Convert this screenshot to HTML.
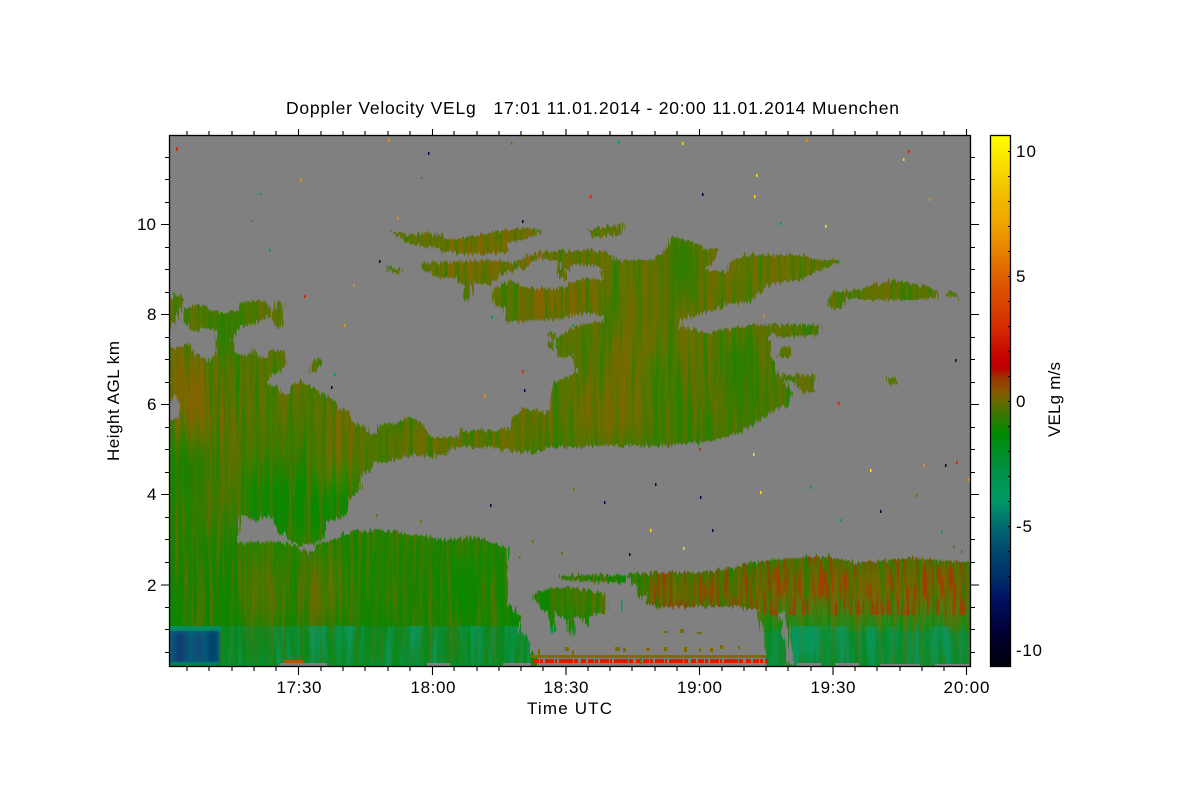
<!DOCTYPE html>
<html><head><meta charset="utf-8"><title>Doppler Velocity VELg</title>
<style>
html,body{margin:0;padding:0;background:#fff}
svg{display:block}
text{font-family:"Liberation Sans",sans-serif;font-size:17px;fill:#000}
</style></head><body>
<svg width="1200" height="800" viewBox="0 0 1200 800" xmlns="http://www.w3.org/2000/svg">
<defs>
<linearGradient id="cb" x1="0" y1="135" x2="0" y2="667" gradientUnits="userSpaceOnUse">
<stop offset="0" stop-color="#ffff00"/><stop offset=".122" stop-color="#f0b800"/><stop offset=".16" stop-color="#efa800"/>
<stop offset=".222" stop-color="#e67f00"/><stop offset=".267" stop-color="#dd5f00"/><stop offset=".361" stop-color="#d42c00"/>
<stop offset=".423" stop-color="#c40000"/><stop offset=".438" stop-color="#bb0000"/><stop offset=".455" stop-color="#9c3000"/>
<stop offset=".479" stop-color="#8a5400"/><stop offset=".5" stop-color="#6a6a00"/><stop offset=".523" stop-color="#3d7500"/>
<stop offset=".56" stop-color="#008a00"/><stop offset=".624" stop-color="#009040"/><stop offset=".686" stop-color="#009a66"/>
<stop offset=".737" stop-color="#006a70"/><stop offset=".78" stop-color="#004a6e"/><stop offset=".83" stop-color="#003068"/>
<stop offset=".874" stop-color="#000f60"/><stop offset=".936" stop-color="#000033"/><stop offset="1" stop-color="#000008"/>
</linearGradient>
<linearGradient id="base" x1="0" y1="135" x2="0" y2="666" gradientUnits="userSpaceOnUse">
<stop offset="0" stop-color="#6c7000"/><stop offset=".4" stop-color="#5c7400"/><stop offset=".65" stop-color="#3a7c00"/><stop offset=".85" stop-color="#168400"/><stop offset="1" stop-color="#0a8800"/>
</linearGradient>
<filter id="jag" x="160" y="125" width="820" height="550" filterUnits="userSpaceOnUse" color-interpolation-filters="sRGB">
<feTurbulence type="fractalNoise" baseFrequency="0.5 0.05" numOctaves="2" seed="7" result="n"/>
<feDisplacementMap in="SourceGraphic" in2="n" scale="11" xChannelSelector="A" yChannelSelector="R"/>
</filter>
<filter id="sg" x="169" y="135" width="801" height="531" filterUnits="userSpaceOnUse" color-interpolation-filters="sRGB">
<feTurbulence type="fractalNoise" baseFrequency="0.22 0.008" numOctaves="3" seed="4"/>
<feColorMatrix values="0 0 0 0 0  0 0 0 0 .54  0 0 0 0 0  3.6 0 0 0 -1.5"/>
</filter>
<filter id="sb" x="169" y="135" width="801" height="531" filterUnits="userSpaceOnUse" color-interpolation-filters="sRGB">
<feTurbulence type="fractalNoise" baseFrequency="0.24 0.009" numOctaves="3" seed="19"/>
<feColorMatrix values="0 0 0 0 .56  0 0 0 0 .38  0 0 0 0 0  3.4 0 0 0 -1.5"/>
</filter>
<filter id="sr" x="640" y="555" width="330" height="60" filterUnits="userSpaceOnUse" color-interpolation-filters="sRGB">
<feTurbulence type="fractalNoise" baseFrequency="0.3 0.03" numOctaves="2" seed="23"/>
<feColorMatrix values="0 0 0 0 .68  0 0 0 0 .2  0 0 0 0 0  5 0 0 0 -2.4"/>
</filter>
<filter id="st" x="169" y="626" width="801" height="40" filterUnits="userSpaceOnUse" color-interpolation-filters="sRGB">
<feTurbulence type="fractalNoise" baseFrequency="0.13 0.012" numOctaves="2" seed="11"/>
<feColorMatrix values="0 0 0 0 .04  0 0 0 0 .6  0 0 0 0 .42  3 0 0 0 -1.2"/>
</filter>
<filter id="bl" x="150" y="120" width="840" height="560" filterUnits="userSpaceOnUse"><feGaussianBlur stdDeviation="9 14"/></filter>
<filter id="bs" x="150" y="120" width="840" height="560" filterUnits="userSpaceOnUse"><feGaussianBlur stdDeviation="3 2"/></filter>
<mask id="m" maskUnits="userSpaceOnUse" x="169" y="135" width="801" height="531">
<rect x="169" y="135" width="801" height="531" fill="#000"/>
<g filter="url(#jag)" fill="#fff">
<polygon points="165,343 179,348 189,343 192,352 202,357 209,362 216,352 216,333 214,330 202,328 192,330 184,322 184,310 199,305 211,308 219,313 236,310 239,303 261,300 271,308 271,315 259,322 241,327 232,340 236,350 244,356 254,353 252,343 257,355 266,358 271,350 284,352 287,363 279,372 271,375 267,384 279,387 281,395 289,393 291,387 301,380 311,387 326,395 336,402 339,408 349,412 351,422 364,425 366,432 379,433 379,425 402,422 407,416 422,423 430,440 449,455 416,453 396,460 382,462 374,460 372,470 361,477 359,490 349,500 344,517 326,522 322,540 316,543 297,545 286,538 276,527 272,517 262,517 256,522 241,513 237,537 237,560 165,680"/>
<polygon points="165,303 179,293 184,300 176,320 165,335"/>
<polygon points="272,317 278,300 283,305 282,328 274,328"/>
<polygon points="311,361 320,358 323,362 316,370 310,372"/>
<polygon points="165,500 237,500 235,547 238,543 273,542 287,543 310,553 320,543 327,542 350,532 383,530 420,535 443,540 477,537 507,548 508,603 520,617 520,632 528,635 530,652 537,657 537,672 165,672"/>
<polygon points="405,430 423,437 457,437 463,430 497,430 510,427 512,418 523,408 537,410 538,415 550,410 552,383 577,373 572,358 575,355 558,358 557,338 573,327 590,323 604,321 604,314 613,300 613,260 653,260 665,250 672,237 687,240 707,248 720,250 713,262 703,270 727,272 728,262 747,255 805,255 815,260 843,260 827,267 813,273 800,280 773,283 760,292 750,302 730,303 707,313 680,320 680,327 710,332 750,325 760,325 767,333 770,342 773,363 783,380 793,393 787,405 770,413 760,420 740,433 707,442 660,445 573,447 553,447 533,453 507,450 480,447 453,448 435,457 413,455 383,463 370,462"/>
<polygon points="750,325 822,325 817,335 780,337 765,333"/>
<polygon points="777,355 783,347 790,347 791,357 782,358"/>
<polygon points="783,375 815,375 817,392 803,393 795,382 785,380"/>
<polygon points="833,292 857,290 880,283 893,280 930,287 939,293 938,297 917,300 867,300 847,298 840,310 828,307 828,298"/>
<polygon points="947,292 958,296 957,298 946,296"/>
<polygon points="888,378 896,378 897,383 887,384"/>
<polygon points="390,230 408,235 433,233 450,240 487,233 520,228 543,230 530,238 507,243 507,252 477,255 447,253 437,248 410,245"/>
<polygon points="587,230 623,223 622,233 593,238"/>
<polygon points="420,263 447,262 490,260 515,263 527,255 553,250 593,250 613,255 613,267 570,263 538,258 527,267 503,273 490,285 473,283 468,303 463,297 465,288 455,278 437,277 422,268"/>
<polygon points="388,267 400,268 400,272 388,272"/>
<polygon points="493,297 495,288 512,280 523,288 555,289 585,278 615,265 620,320 590,313 575,315 560,319 505,322 505,307 495,307"/>
<polygon points="560,257 612,262 612,272 590,264 570,266 566,280 558,278"/>
<polygon points="556,335 548,333 552,340 546,345 550,350"/>
<polygon points="646,573 700,572 723,570 750,563 770,560 807,557 830,557 857,563 910,558 975,563 975,672 767,672 765,640 760,623 757,610 733,607 700,607 660,607 647,603"/>
<polygon points="560,575 627,575 627,583 600,582 560,580"/>
<polygon points="627,574 650,574 650,590 640,600 634,585"/>
<polygon points="533,593 553,588 577,588 603,593 608,610 583,618 563,617 543,610 535,600"/>
<polygon points="548,612 553,612 556,630 552,632"/>
<polygon points="565,615 575,615 573,637 571,637"/>
<polygon points="583,615 590,615 588,626 585,626"/>
</g>
<g filter="url(#jag)" fill="#000">
<polygon points="165,407 176,393 179,408 178,418 165,421"/>
<polygon points="780,613 785,613 794,664 787,664"/>
<polygon points="563,270 603,273 603,280 583,278 567,280"/>
</g>
</mask>
<clipPath id="pc"><rect x="169" y="135" width="801" height="531"/></clipPath>
</defs>

<rect width="1200" height="800" fill="#fff"/>
<rect x="169" y="135" width="801" height="531" fill="#808080"/>

<g clip-path="url(#pc)">
<g mask="url(#m)">
<rect x="169" y="135" width="801" height="531" fill="url(#base)"/>
<g filter="url(#bl)">
<rect x="169" y="340" width="38" height="90" fill="#8c6400"/>
<rect x="205" y="310" width="30" height="20" fill="#7a6b00"/>
<rect x="210" y="400" width="30" height="70" fill="#7a6800"/>
<rect x="200" y="490" width="30" height="35" fill="#8a6200"/>
<rect x="325" y="400" width="35" height="70" fill="#7e6800"/>
<rect x="385" y="430" width="140" height="25" fill="#7d6a00"/>
<rect x="525" y="390" width="30" height="50" fill="#8a6400"/>
<rect x="440" y="235" width="110" height="40" fill="#866600"/>
<rect x="520" y="285" width="70" height="32" fill="#8a6200"/>
<rect x="615" y="330" width="50" height="100" fill="#786c00"/>
<rect x="575" y="385" width="40" height="55" fill="#7c6a00"/>
<rect x="720" y="260" width="90" height="20" fill="#777000"/>
<rect x="680" y="330" width="60" height="10" fill="#6e7000"/>
<rect x="170" y="430" width="60" height="180" fill="#227e00" opacity=".6"/>
<rect x="245" y="470" width="105" height="70" fill="#0c8800"/>
<rect x="205" y="300" width="40" height="60" fill="#2b8000"/>
<rect x="250" y="560" width="30" height="60" fill="#7c6a00" opacity=".8"/>
<rect x="300" y="560" width="28" height="60" fill="#8a6200" opacity=".8"/>
<rect x="330" y="550" width="60" height="60" fill="#1a8400" opacity=".8"/>
<rect x="395" y="545" width="40" height="70" fill="#1f8000" opacity=".8"/>
<rect x="440" y="545" width="70" height="80" fill="#0a8800"/>
<rect x="650" y="350" width="25" height="90" fill="#3f7a00"/>
<rect x="725" y="340" width="30" height="90" fill="#2d7e00"/>
<rect x="670" y="240" width="25" height="60" fill="#2a7e00"/>
<rect x="560" y="590" width="50" height="10" fill="#8a5e00"/>
<rect x="560" y="605" width="40" height="8" fill="#2d7c00"/>
<rect x="640" y="578" width="130" height="28" fill="#8c5a00"/>
<rect x="770" y="565" width="200" height="40" fill="#7d6200"/>
<rect x="760" y="612" width="210" height="54" fill="#0a8c20"/>
</g>
<rect x="169" y="135" width="801" height="531" filter="url(#sg)" opacity=".55"/>
<rect x="169" y="135" width="801" height="531" filter="url(#sb)" opacity=".5"/>
<rect x="640" y="555" width="330" height="60" filter="url(#sr)" opacity=".8"/>
<rect x="219" y="626" width="311" height="40" fill="#04905a" opacity=".3"/>
<rect x="765" y="632" width="205" height="34" fill="#04905a" opacity=".3"/>
<rect x="169" y="626" width="801" height="40" filter="url(#st)" opacity=".75"/>
<rect x="169" y="626" width="52" height="6" fill="#008e60"/>
<rect x="169" y="631" width="50" height="33" fill="#0a5e78"/>
<g filter="url(#bs)">
<rect x="174" y="633" width="12" height="29" fill="#073c72"/>
<rect x="193" y="634" width="9" height="28" fill="#0a4a76"/>
<rect x="208" y="632" width="9" height="30" fill="#053f6c"/>
</g>
<rect x="169" y="662" width="50" height="3" fill="#007a6a"/>
</g>
<!-- surface band -->
<rect x="530" y="655" width="236" height="3" fill="#7c6c00"/>
<line x1="533" y1="661" x2="768" y2="661" stroke="#d81e00" stroke-width="4" stroke-dasharray="6 1 3 2 9 1 2 2 14 1 4 3 5 2"/>
<rect x="640" y="656" width="2" height="8" fill="#6b7000"/>
<g fill="#7b6a00">
<rect x="538" y="649" width="2" height="6"/><rect x="565" y="647" width="4" height="4"/><rect x="572" y="650" width="2" height="5"/>
<rect x="615" y="647" width="5" height="4"/><rect x="623" y="648" width="3" height="4"/><rect x="646" y="648" width="4" height="3"/>
<rect x="664" y="647" width="3" height="4"/><rect x="684" y="647" width="3" height="5"/><rect x="699" y="648" width="2" height="4"/>
<rect x="697" y="632" width="5" height="2"/><rect x="680" y="629" width="4" height="4"/><rect x="664" y="631" width="4" height="2"/>
<rect x="720" y="645" width="3" height="4"/><rect x="710" y="648" width="3" height="4"/><rect x="738" y="646" width="2" height="3"/>
</g>
<g fill="#808080">
<rect x="280" y="663" width="47" height="3"/><rect x="427" y="663" width="23" height="3"/><rect x="503" y="663" width="28" height="3"/>
<rect x="797" y="663" width="24" height="3"/><rect x="835" y="663" width="24" height="3"/><rect x="880" y="664" width="40" height="2"/><rect x="935" y="664" width="34" height="2"/>
</g>
<rect x="283" y="660" width="20" height="3" fill="#a85a00"/>
<!-- specks -->
<g fill="#d42000">
<rect x="176" y="147" width="1.5" height="4"/><rect x="304" y="295" width="1.5" height="3"/><rect x="699" y="448" width="1.5" height="3"/><rect x="838" y="402" width="1.5" height="3"/><rect x="908" y="150" width="1.5" height="3"/><rect x="956" y="461" width="1.5" height="3"/><rect x="590" y="195" width="1.5" height="3"/><rect x="522" y="370" width="1.5" height="3"/>
</g>
<g fill="#f09000">
<rect x="388" y="139" width="1.5" height="3"/><rect x="300" y="179" width="1.5" height="3"/><rect x="344" y="324" width="1.5" height="3"/><rect x="353" y="284" width="1.5" height="3"/><rect x="397" y="217" width="1.5" height="3"/><rect x="484" y="394" width="1.5" height="3"/><rect x="763" y="314" width="1.5" height="3"/><rect x="929" y="198" width="1.5" height="3"/><rect x="923" y="464" width="1.5" height="3"/><rect x="968" y="478" width="1.5" height="3"/><rect x="806" y="139" width="1.5" height="3"/>
</g>
<g fill="#ffe000">
<rect x="903" y="158" width="1.5" height="3"/><rect x="753" y="453" width="1.5" height="3"/><rect x="756" y="174" width="1.5" height="3"/><rect x="754" y="195" width="1.5" height="3"/><rect x="760" y="491" width="1.5" height="3"/><rect x="870" y="469" width="1.5" height="3"/><rect x="683" y="547" width="1.5" height="3"/><rect x="650" y="529" width="1.5" height="3"/><rect x="825" y="225" width="1.5" height="3"/><rect x="682" y="142" width="1.5" height="3"/>
</g>
<g fill="#000a40">
<rect x="428" y="152" width="1.5" height="3"/><rect x="331" y="386" width="1.5" height="3"/><rect x="379" y="260" width="1.5" height="3"/><rect x="522" y="220" width="1.5" height="3"/><rect x="524" y="389" width="1.5" height="3"/><rect x="955" y="359" width="1.5" height="3"/><rect x="945" y="464" width="1.5" height="3"/><rect x="702" y="193" width="1.5" height="3"/><rect x="655" y="483" width="1.5" height="3"/><rect x="604" y="501" width="1.5" height="3"/><rect x="490" y="504" width="1.5" height="3"/><rect x="700" y="496" width="1.5" height="3"/><rect x="712" y="529" width="1.5" height="3"/><rect x="880" y="510" width="1.5" height="3"/><rect x="629" y="553" width="1.5" height="3"/>
</g>
<g fill="#009a66">
<rect x="260" y="193" width="1.5" height="2"/><rect x="269" y="249" width="1.5" height="3"/><rect x="334" y="373" width="1.5" height="3"/><rect x="387" y="265" width="1.5" height="3"/><rect x="491" y="316" width="2" height="3"/><rect x="572" y="324" width="1.5" height="3"/><rect x="780" y="222" width="1.5" height="3"/><rect x="941" y="531" width="1.5" height="3"/><rect x="618" y="141" width="1.5" height="3"/><rect x="810" y="486" width="1.5" height="3"/><rect x="840" y="519" width="1.5" height="3"/><rect x="621" y="600" width="1.5" height="12"/>
</g>
<g fill="#6a7000">
<rect x="251" y="220" width="1.5" height="2"/><rect x="421" y="177" width="1.5" height="2"/><rect x="916" y="494" width="1.5" height="3"/><rect x="953" y="545" width="1.5" height="3"/><rect x="961" y="550" width="1.5" height="3"/><rect x="511" y="142" width="1.5" height="3"/><rect x="573" y="488" width="1.5" height="3"/><rect x="532" y="540" width="1.5" height="3"/><rect x="561" y="552" width="1.5" height="3"/><rect x="519" y="556" width="1.5" height="3"/><rect x="420" y="520" width="1.5" height="3"/><rect x="376" y="514" width="1.5" height="3"/>
</g>
</g>

<!-- axes frame -->
<rect x="169.5" y="135.5" width="801" height="531" fill="none" stroke="#000" stroke-width="1.3"/>
<path fill="none" stroke="#000" stroke-width="1.1" d="
M187 135V131M209 135V131M232 135V131M254 135V131M276 135V131M321 135V131M343 135V131M365 135V131M388 135V131M410 135V131M454 135V131M477 135V131M499 135V131M521 135V131M543 135V131M588 135V131M610 135V131M632 135V131M655 135V131M677 135V131M722 135V131M744 135V131M766 135V131M788 135V131M811 135V131M855 135V131M877 135V131M900 135V131M922 135V131M944 135V131
M298.5 135V129M432.5 135V129M566 135V129M699.5 135V129M833 135V129M966.5 135V129
M187 667V671M209 667V671M232 667V671M254 667V671M276 667V671M321 667V671M343 667V671M365 667V671M388 667V671M410 667V671M454 667V671M477 667V671M499 667V671M521 667V671M543 667V671M588 667V671M610 667V671M632 667V671M655 667V671M677 667V671M722 667V671M744 667V671M766 667V671M788 667V671M811 667V671M855 667V671M877 667V671M900 667V671M922 667V671M944 667V671
M298.5 667V675M432.5 667V675M566 667V675M699.5 667V675M833 667V675M966.5 667V675
M169 157.5H165M169 179.5H165M169 202.5H165M169 247.5H165M169 269.5H165M169 292.5H165M169 337.5H165M169 359.5H165M169 382.5H165M169 427.5H165M169 449.5H165M169 472.5H165M169 517.5H165M169 539.5H165M169 562.5H165M169 607.5H165M169 629.5H165M169 652.5H165
M169 224.5H161M169 314.5H161M169 404.5H161M169 494.5H161M169 585H161
M971 157.5H975M971 179.5H975M971 202.5H975M971 247.5H975M971 269.5H975M971 292.5H975M971 337.5H975M971 359.5H975M971 382.5H975M971 427.5H975M971 449.5H975M971 472.5H975M971 517.5H975M971 539.5H975M971 562.5H975M971 607.5H975M971 629.5H975M971 652.5H975
M971 224.5H979M971 314.5H979M971 404.5H979M971 494.5H979M971 585H979"/>

<!-- colorbar -->
<rect x="990.5" y="135.5" width="20" height="531" fill="url(#cb)" stroke="#000" stroke-width="1.3"/>
<path fill="none" stroke="#000" stroke-width="1" d="M1010 151.5h-2M1010 176.5h-2M1010 201.5h-2M1010 226.5h-2M1010 251.5h-2M1010 276.5h-2M1010 301.5h-2M1010 326.5h-2M1010 351.5h-2M1010 376.5h-2M1010 401.5h-2M1010 426.5h-2M1010 451.5h-2M1010 476.5h-2M1010 501.5h-2M1010 526.5h-2M1010 551.5h-2M1010 576.5h-2M1010 601.5h-2M1010 626.5h-2M1010 651.5h-2"/>

<!-- text -->
<text x="286" y="114" textLength="613" lengthAdjust="spacing" style="font-size:17.5px" xml:space="preserve">Doppler Velocity VELg   17:01 11.01.2014 - 20:00 11.01.2014 Muenchen</text>
<text x="276.5" y="693" textLength="45">17:30</text>
<text x="410.5" y="693" textLength="45">18:00</text>
<text x="543.5" y="693" textLength="45">18:30</text>
<text x="677" y="693" textLength="45">19:00</text>
<text x="810.5" y="693" textLength="45">19:30</text>
<text x="943.5" y="693" textLength="46">20:00</text>
<text x="527" y="714" textLength="85">Time UTC</text>
<text x="137" y="230" textLength="19">10</text>
<text x="147" y="320">8</text>
<text x="147" y="410">6</text>
<text x="147" y="500">4</text>
<text x="147" y="591">2</text>
<text transform="translate(119,461) rotate(-90)" textLength="120">Height AGL km</text>
<text x="1016" y="157" textLength="20">10</text>
<text x="1016" y="282">5</text>
<text x="1016" y="407">0</text>
<text x="1016" y="532" textLength="16" xml:space="preserve">-5</text>
<text x="1016" y="656" textLength="26" xml:space="preserve">-10</text>
<text transform="translate(1060,437) rotate(-90)" textLength="75">VELg m/s</text>
</svg>
</body></html>
